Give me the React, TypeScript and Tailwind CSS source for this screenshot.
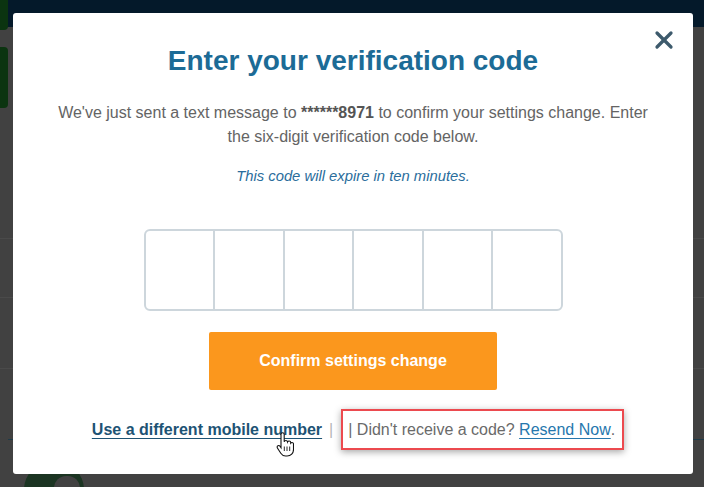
import { X } from "lucide-react";

function HandCursor() {
  return (
    <svg width="18" height="26" viewBox="0 0 18 26" className="absolute left-[184px] top-[23px]">
      <path
        d="M5 2.5c0-1 .7-1.7 1.6-1.7s1.6.7 1.6 1.7v7.2c.3-.8 1-1.2 1.7-1.2.9 0 1.5.6 1.6 1.5.3-.6.9-1 1.6-1 .9 0 1.6.7 1.6 1.6v.5c.3-.4.8-.6 1.3-.6.9 0 1.5.7 1.5 1.6v5.4c0 3.7-2.6 6.5-6.4 6.5H9.6c-2.2 0-3.6-1-4.8-2.8L1.4 16c-.5-.8-.3-1.8.5-2.2.7-.4 1.6-.2 2.1.5l1 1.5V2.5z"
        fill="#fff"
        stroke="#111"
        strokeWidth="1.1"
      />
      <path d="M8.3 14.5v4.5M11 14.5v4.5M13.7 14.5v4.5" stroke="#111" strokeWidth="0.9" />
    </svg>
  );
}

export default function App() {
  return (
    <div className="relative h-[487px] w-[704px] overflow-hidden bg-[#414141] font-['Liberation_Sans',Arial,sans-serif]">
      {/* Dimmed page behind */}
      <div className="h-[27px] bg-[#04192a]" />
      <div className="flex">
        <div className="flex w-[8px] flex-col gap-[17px]">
          <div className="-mt-[27px] h-[30px] rounded-br bg-[#0b3410]" />
          <div className="h-[61px] rounded-r bg-[#0b3410]" />
        </div>
      </div>
      <div className="mt-[130px] h-px bg-[#4a4a4a]" />
      <div className="mt-[58px] h-px bg-[#4a4a4a]" />
      <div className="mt-[70px] h-px bg-[#4a4a4a]" />
      <div className="mt-[70px] ml-[8px] h-px bg-[#1f3a48]" />

      {/* Partially visible toggle under modal */}
      <div className="absolute left-[24px] top-[460px] h-[60px] w-[60px] rounded-full bg-[#1b3422]">
        <div className="ml-[30px] mt-[16px] h-[24px] w-[26px] rounded-full bg-[#414141]" />
      </div>

      {/* Modal */}
      <div className="absolute left-[13px] top-[13px] flex h-[461px] w-[680px] flex-col items-center rounded-[3px] bg-white">
        <button className="absolute right-[15px] top-[13px] text-[#3d5a6c]">
          <X size={28} strokeWidth={2.8} />
        </button>
        <h1 className="mt-[30px] text-[28px] font-bold leading-[36px] text-[#1c6b96]">
          Enter your verification code
        </h1>
        <p className="mt-[22px] px-[40px] text-center text-[16px] leading-[24px] text-[#646464]">
          We've just sent a text message to <b className="text-[#555]">******8971</b> to confirm your settings
          change. Enter the six-digit verification code below.
        </p>
        <p className="mt-[17px] text-[14.8px] italic leading-[20px] text-[#2a6d9c]">
          This code will expire in ten minutes.
        </p>
        <div className="mt-[43px] flex h-[82px] w-[419px] rounded-[6px] border-2 border-[#cdd6dc]">
          {[0, 1, 2, 3, 4, 5].map((i) => (
            <div key={i} className="flex-1 border-l-2 border-[#cdd6dc] first:border-l-0" />
          ))}
        </div>
        <button className="mt-[21px] h-[58px] w-[288px] rounded-[2px] bg-[#fb971d] text-[16px] font-bold text-white">
          Confirm settings change
        </button>
        <div className="relative ml-[10px] mt-[19px] flex items-center text-[16px] leading-[20px]">
          <a className="font-bold text-[#1d5374] underline underline-offset-[3px]">Use a different mobile number</a>
          <span className="ml-[7px] text-[#b5b5b5]">|</span>
          <div className="ml-[8px] flex h-[41px] items-center border-2 border-[#ec4a4f] pl-[5px] pr-[7px] text-[#6a6a6a] shadow-[0_2px_7px_rgba(0,0,0,0.35)]">
            <span>| Didn't receive a code?&nbsp;</span>
            <a className="text-[#2677ad] underline underline-offset-[3px]">Resend Now</a>
            <span>.</span>
          </div>
          <HandCursor />
        </div>
      </div>
    </div>
  );
}
